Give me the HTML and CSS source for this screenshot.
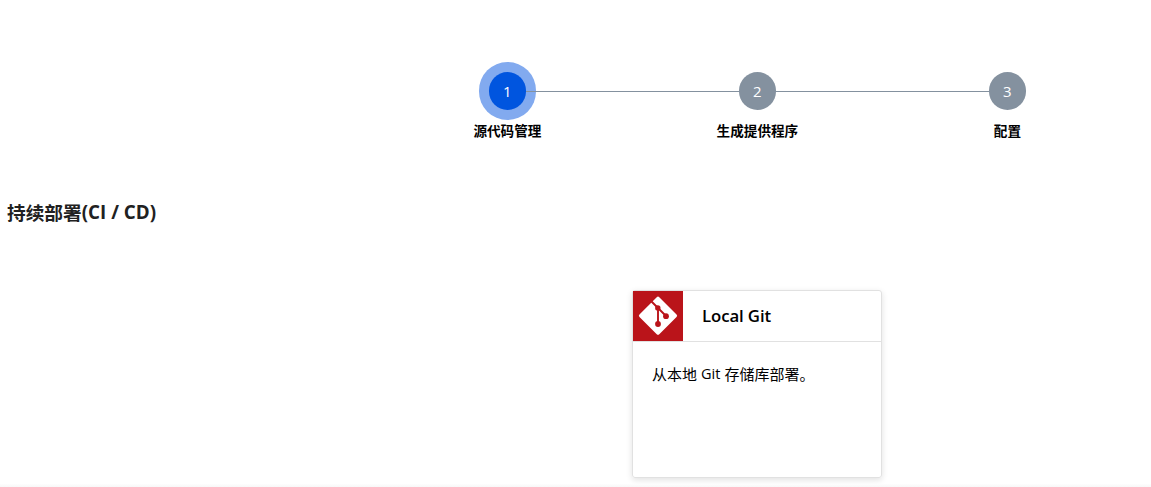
FILE: index.html
```html
<!DOCTYPE html>
<html lang="zh-CN">
<head>
<meta charset="utf-8">
<title>持续部署</title>
<link rel="stylesheet" href="styles.css">
</head>
<body>
<main class="page">
  <ol class="steps">
    <li class="step active"><span class="dot">1</span><span class="label">源代码管理</span></li>
    <li class="step"><span class="dot">2</span><span class="label">生成提供程序</span></li>
    <li class="step"><span class="dot">3</span><span class="label">配置</span></li>
  </ol>
  <h1 class="title"><span class="title-name">持续部署</span><span class="title-latin">(CI / CD)</span></h1>
  <section class="card">
    <header class="card-head">
      <svg class="logo" width="50" height="50" viewBox="0 0 50 50">
        <rect width="50" height="50" fill="#ba141a"/>
        <rect x="11" y="10.7" width="28" height="28" rx="1.8" fill="#fff" transform="rotate(45 25 24.7)"/>
        <g stroke="#ba141a" stroke-width="1.9" fill="none"><path d="M17.5 9.5 24.5 16.5 33 25M25 16.5V33"/></g>
        <g fill="#ba141a"><circle cx="24.8" cy="16.9" r="2.7"/><circle cx="33" cy="25.2" r="2.9"/><circle cx="25" cy="33" r="2.9"/></g>
      </svg>
      <h2 class="card-title"><span class="card-name">Local Git</span></h2>
    </header>
    <p class="card-body"><span>从本地</span><span class="git">Git</span><span>存储库部署。</span></p>
  </section>
</main>
<div class="bottom-shade"></div>
</body>
</html>
```
FILE: styles.css
```css
* { box-sizing: border-box; }
body {
  margin: 0;
  height: 487px;
  overflow: hidden;
  display: flex;
  flex-direction: column;
  background: #fff;
  color: #000;
  font-family: "Open Sans", "Noto Sans CJK SC", sans-serif;
}
.page { height: 484px; flex: none; }
.steps {
  list-style: none;
  display: flex;
  margin: 0 0 0 382.4px;
  padding: 72px 0 0;
}
.step {
  width: 250px;
  display: flex;
  flex-direction: column;
  align-items: center;
  position: relative;
}
.step:not(:last-child)::after {
  content: "";
  position: absolute;
  top: 19px;
  left: 144px;
  width: 213px;
  height: 1px;
  background: #84919f;
}
.dot {
  width: 37.5px;
  height: 37.5px;
  border-radius: 50%;
  background: #84919f;
  color: #fff;
  font: 15px/38px "Open Sans", sans-serif;
  text-align: center;
}
.active .dot { background: #0055df; box-shadow: 0 0 0 10px #82aaef; }
.label {
  margin-top: 10.5px;
  font: bold 13.6px/20px "Noto Sans CJK SC", sans-serif;
  white-space: nowrap;
}
.title {
  display: flex;
  margin: 58px 0 0 7px;
  font: bold 18.7px/28px "Noto Sans CJK SC", sans-serif;
  color: #212121;
}
.title-latin { font-family: "Open Sans", sans-serif; font-size: 18.8px; }
.card {
  width: 250px;
  height: 188px;
  margin: 64px 0 0 632px;
  border: 1px solid #e1e1e1;
  border-radius: 3px;
  box-shadow: 0 2px 6px rgba(0, 0, 0, .12);
}
.card-head {
  display: flex;
  align-items: center;
  height: 51px;
  border-bottom: 1px solid #e1e1e1;
}
.logo { display: block; }
.card-title { margin: 0 0 0 19px; font: 600 16.8px/24px "Open Sans", sans-serif; letter-spacing: -0.1px; }
.card-body {
  display: flex;
  gap: 4px;
  margin: 20px 0 0 19px;
  font: 15px/24px "Noto Sans CJK SC", sans-serif;
}
.git { font-family: "Open Sans", sans-serif; font-size: 14.5px; }
.bottom-shade { height: 3px; background: linear-gradient(#fdfdfd, #f8f8f8); }
```
